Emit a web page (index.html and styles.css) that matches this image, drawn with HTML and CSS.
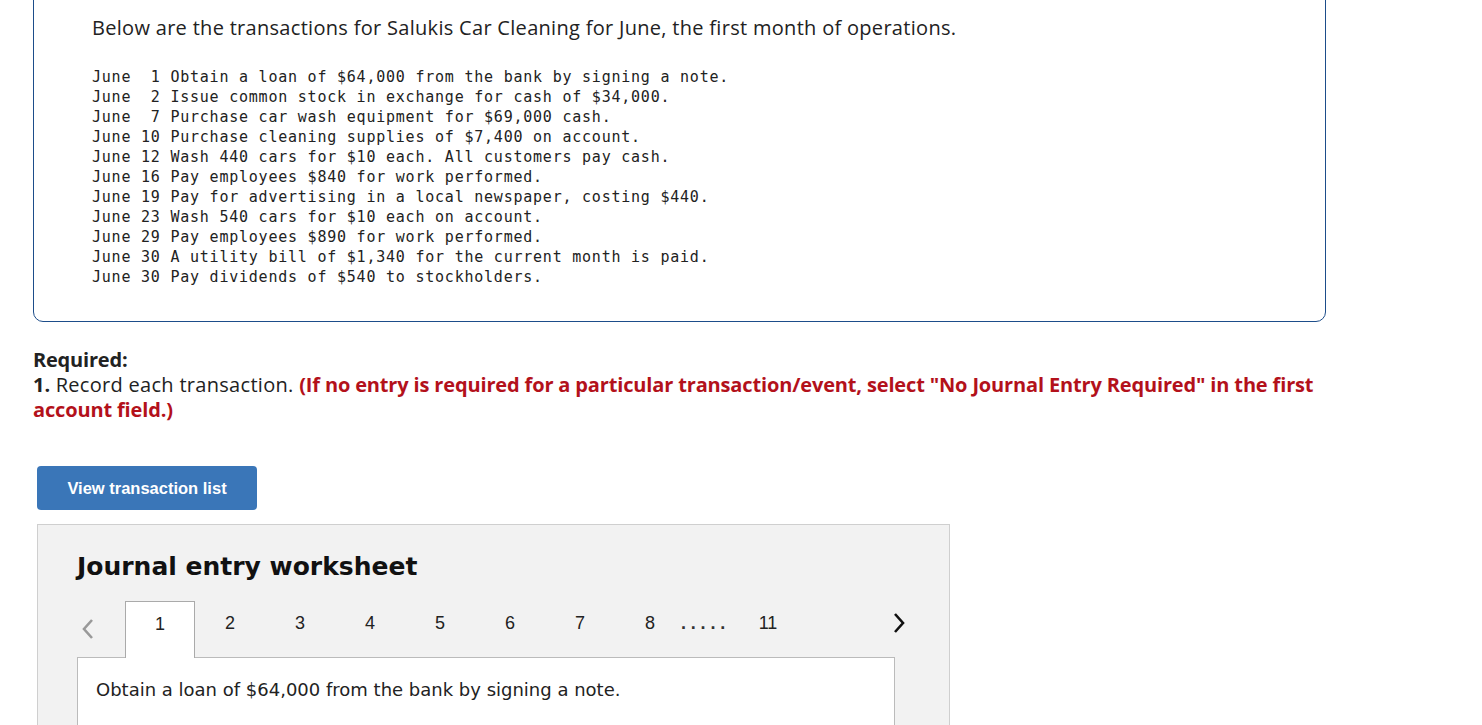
FILE: index.html
```html
<!DOCTYPE html>
<html>
<head>
<meta charset="utf-8">
<link rel="stylesheet" href="styles.css">
</head>
<body>
<div class="page">
  <div class="problem">
    <p class="intro">Below are the transactions for Salukis Car Cleaning for June, the first month of operations.</p>
<pre class="list">June  1 Obtain a loan of $64,000 from the bank by signing a note.
June  2 Issue common stock in exchange for cash of $34,000.
June  7 Purchase car wash equipment for $69,000 cash.
June 10 Purchase cleaning supplies of $7,400 on account.
June 12 Wash 440 cars for $10 each. All customers pay cash.
June 16 Pay employees $840 for work performed.
June 19 Pay for advertising in a local newspaper, costing $440.
June 23 Wash 540 cars for $10 each on account.
June 29 Pay employees $890 for work performed.
June 30 A utility bill of $1,340 for the current month is paid.
June 30 Pay dividends of $540 to stockholders.</pre>
  </div>

  <div class="required">
    <div class="req-title">Required:</div>
    <p class="req-text"><b class="num">1.</b> Record each transaction. <b class="red">(If no entry is required for a particular transaction/event, select "No Journal Entry Required" in the first account field.)</b></p>
  </div>

  <button class="btn">View transaction list</button>

  <div class="worksheet">
    <h2 class="ws-title">Journal entry worksheet</h2>
    <div class="tabs">
      <span class="arrow prev">
        <svg width="14" height="22" viewBox="0 0 14 22"><path d="M11 2 L3 11 L11 20" fill="none" stroke="#999" stroke-width="2.6"/></svg>
      </span>
      <span class="tab active">1</span>
      <span class="tab">2</span>
      <span class="tab">3</span>
      <span class="tab">4</span>
      <span class="tab">5</span>
      <span class="tab">6</span>
      <span class="tab">7</span>
      <span class="tab">8</span>
      <span class="dots">.....</span>
      <span class="tab last">11</span>
      <span class="arrow next">
        <svg width="14" height="22" viewBox="0 0 14 22"><path d="M3 2 L11 11 L3 20" fill="none" stroke="#111" stroke-width="2.6"/></svg>
      </span>
    </div>
    <div class="panel">
      <p class="desc">Obtain a loan of $64,000 from the bank by signing a note.</p>
    </div>
  </div>
</div>
</body>
</html>
```

FILE: styles.css
```css
html, body {
  margin: 0;
  padding: 0;
  background: #fff;
  overflow: hidden;
}
.page {
  padding-left: 33px;
  font-family: "Open Sans", "Liberation Sans", sans-serif;
  color: #222;
}
.problem {
  width: 1293px;
  margin-top: -20px;
  border: 1px solid #1d4d8a;
  border-radius: 10px;
  padding: 34px 0 34px 58px;
  box-sizing: border-box;
}
.intro {
  margin: 0 0 26px 0;
  font-size: 20px;
  letter-spacing: 0.3px;
  line-height: 26px;
}
.list {
  margin: 0;
  font-family: "DejaVu Sans Mono", monospace;
  font-size: 15px;
  letter-spacing: 0.77px;
  line-height: 20px;
  color: #222;
}
.required {
  margin-top: 25px;
  width: 1293px;
  font-size: 20px;
  letter-spacing: 0.3px;
  line-height: 25px;
}
.req-title {
  font-weight: bold;
  letter-spacing: -0.2px;
}
.req-text {
  margin: 0;
}
.num {
  font-weight: bold;
  letter-spacing: 0;
}
.red {
  color: #b3111b;
  font-weight: bold;
  letter-spacing: -0.15px;
}
.btn {
  display: block;
  margin: 44px 0 0 4px;
  width: 220px;
  height: 44px;
  background: #3a76b8;
  border: none;
  border-radius: 4px;
  color: #fff;
  font-family: "Liberation Sans", Arial, sans-serif;
  font-weight: bold;
  font-size: 16.5px;
  padding: 0;
}
.worksheet {
  margin: 14px 0 0 4px;
  width: 913px;
  height: 260px;
  background: #f2f2f2;
  border: 1px solid #cfcfcf;
  box-sizing: border-box;
  padding: 0 54px 0 39px;
}
.ws-title {
  margin: 26px 0 0 0;
  font-family: "DejaVu Sans", Verdana, sans-serif;
  font-weight: bold;
  font-size: 25px;
  line-height: 32px;
  color: #111;
}
.tabs {
  display: flex;
  align-items: stretch;
  height: 56px;
  margin-top: 18px;
  margin-right: -17px;
  position: relative;
  z-index: 1;
}
.arrow {
  display: flex;
  align-items: center;
}
.prev {
  width: 48px;
  padding-left: 4px;
  box-sizing: border-box;
}
.tab {
  width: 70px;
  display: flex;
  align-items: center;
  justify-content: center;
  padding-bottom: 12px;
  font-family: "Liberation Sans", Arial, sans-serif;
  font-size: 18px;
  color: #222;
  box-sizing: border-box;
}
.tab.active {
  background: #fff;
  border: 1px solid #aaa;
  border-bottom: none;
  height: 57px;
}
.dots {
  display: flex;
  align-items: center;
  padding-bottom: 12px;
  width: 64px;
  font-family: "Liberation Sans", Arial, sans-serif;
  font-weight: bold;
  font-size: 18px;
  letter-spacing: 4.8px;
  color: #333;
  margin-left: -4px;
  box-sizing: border-box;
}
.tab.last {
  width: 46px;
}
.next {
  margin-left: auto;
  width: 26px;
  justify-content: center;
  padding-bottom: 12px;
}
.panel {
  background: #fff;
  border: 1px solid #bbb;
  height: 120px;
  box-sizing: border-box;
  padding: 0 18px;
}
.desc {
  margin: 21px 0 0 0;
  font-family: "DejaVu Sans", Verdana, sans-serif;
  font-size: 18px;
  line-height: 22px;
  color: #222;
}
```
